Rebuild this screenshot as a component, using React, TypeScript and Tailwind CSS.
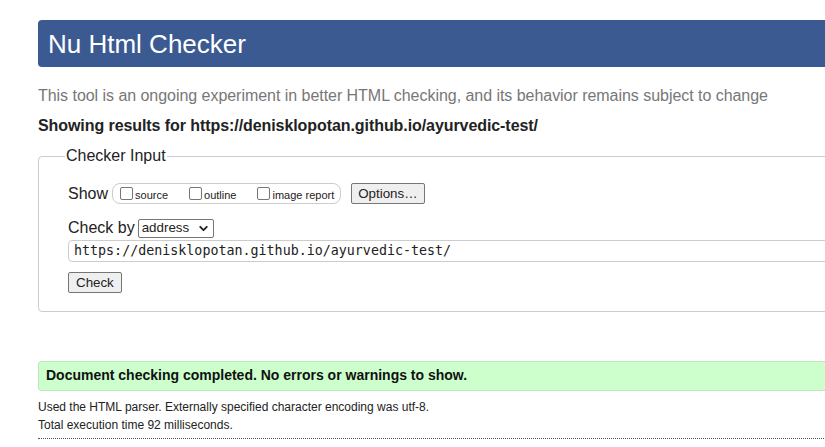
import { ChevronDown } from 'lucide-react';

function Checkbox({ label }: { label: string }) {
  return (
    <label className="flex items-center gap-[2px]">
      <span className="block w-[13px] h-[13px] border border-[#767676] rounded-[2px] bg-white" />
      <span className="text-[11px] text-[#222] pt-[3px]">{label}</span>
    </label>
  );
}

function App() {
  return (
    <div className="w-full h-[447px] overflow-hidden bg-white font-['Liberation_Sans',Arial,sans-serif] text-[#222]">
      <div className="w-[1000px] pl-[38px] pt-[20px]">
        {/* header bar */}
        <header className="h-[47px] bg-[#3b5a91] rounded-l-[4px] flex items-center pl-[10px]">
          <h1 className="text-[26px] text-white leading-none pt-[1px]">Nu Html Checker</h1>
        </header>

        <p className="mt-[20px] text-[16px] leading-[18px] tracking-[-0.04px] text-[#777]">
          This tool is an ongoing experiment in better HTML checking, and its behavior remains subject to change
        </p>
        <p className="mt-[12px] text-[16px] leading-[18px] tracking-[-0.075px] font-bold text-[#222]">
          Showing results for https://denisklopotan.github.io/ayurvedic-test/
        </p>

        {/* checker input */}
        <fieldset className="mt-[12px] border border-[#ccc] rounded-l-[4px] pl-[29px] pr-0 pb-[17px] pt-[18px]">
          <legend className="ml-[-3px] px-[1px] text-[16px] leading-[18px] text-[#222]">Checker Input</legend>

          <div className="flex items-center h-[21px]">
            <span className="text-[16px] mr-[4px]">Show</span>
            <div className="flex items-center gap-[21px] h-[21px] border border-[#ccc] rounded-[8px] pl-[7px] pr-[6px]">
              <Checkbox label="source" />
              <Checkbox label="outline" />
              <Checkbox label="image report" />
            </div>
            <button className="ml-[10px] h-[21px] px-[6px] bg-[#efefef] border border-[#767676] rounded-[2px] text-[13.33px] leading-none">
              Options…
            </button>
          </div>

          <div className="mt-[14px] flex items-center h-[20px]">
            <span className="text-[16px] mr-[3px]">Check by</span>
            <div className="flex items-center justify-between w-[76px] h-[19px] border border-[#767676] rounded-[2px] pl-[3px] pr-[3px] text-[13.33px]">
              <span>address</span>
              <ChevronDown className="w-[13px] h-[13px]" strokeWidth={3.5} />
            </div>
          </div>

          <div className="mt-[2px] h-[22px] border border-[#ccc] rounded-l-[4px] flex items-center pl-[5px] font-['DejaVu_Sans_Mono',monospace] text-[13.33px]">
            https://denisklopotan.github.io/ayurvedic-test/
          </div>

          <button className="mt-[10px] h-[21px] px-[7px] bg-[#efefef] border border-[#767676] rounded-[2px] text-[13.33px] leading-none">
            Check
          </button>
        </fieldset>

        {/* result */}
        <div className="mt-[49px] h-[30px] bg-[#ccffcc] border border-[#bde6bd] rounded-l-[3px] flex items-center pl-[7px]">
          <span className="text-[14px] font-bold text-[#111]">Document checking completed. No errors or warnings to show.</span>
        </div>
        <p className="mt-[7px] text-[12px] leading-[18px] text-[#222]">
          Used the HTML parser. Externally specified character encoding was utf-8.
        </p>
        <p className="text-[12px] leading-[18px] text-[#222]">Total execution time 92 milliseconds.</p>
        <div className="mt-[4px] border-t border-dotted border-[#555]" />
      </div>
    </div>
  );
}

export default App;
